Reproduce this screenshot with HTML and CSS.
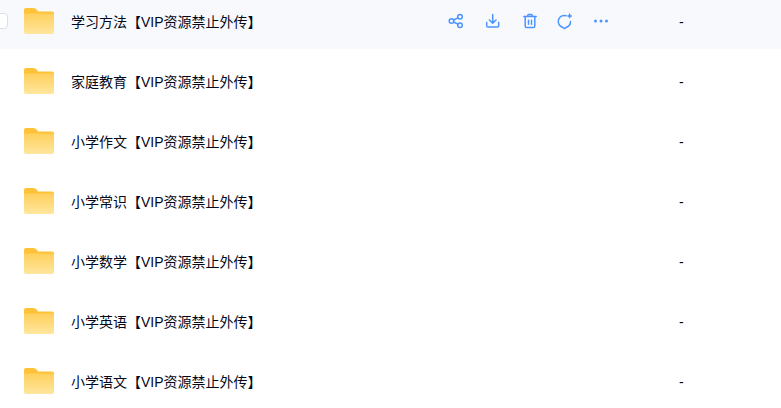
FILE: index.html
```html
<!DOCTYPE html>
<html lang="en">
<head>
    <meta charset="UTF-8">
    <title>文件列表</title>
    <link rel="stylesheet" href="styles.css">
</head>
<body>
    <svg class="icon-defs" width="0" height="0">
        <defs>
            <linearGradient id="folderBody" x1="0" y1="0" x2="0" y2="1">
                <stop offset="0" stop-color="#ffd05c"/>
                <stop offset="1" stop-color="#ffe69f"/>
            </linearGradient>
            <symbol id="folder" viewBox="0 0 30 26">
                <path d="M2 0h7.500c1.500 0 2.500.7 3.500 2l1 1.500H28a2 2 0 0 1 2 2V8H0V2a2 2 0 0 1 2-2z" fill="#ffc238"/>
                <path d="M0 5.500h28a2 2 0 0 1 2 2V24a2 2 0 0 1-2 2H2a2 2 0 0 1-2-2z" fill="url(#folderBody)"/>
            </symbol>
        </defs>
    </svg>

    <div class="file-list">
        <!-- first row is the hovered one -->
        <div class="file-row hovered">
            <span class="checkbox"></span>
            <svg class="folder-icon"><use href="#folder"/></svg>
            <div class="file-name">学习方法【VIP资源禁止外传】</div>
            <div class="row-actions">
                <svg class="action-icon" viewBox="0 0 16 16">
                    <circle cx="3.500" cy="8" r="2.300"/>
                    <circle cx="12" cy="3.800" r="2.300"/>
                    <circle cx="12" cy="12.200" r="2.300"/>
                    <path d="M5.600 7 9.900 4.800M5.600 9l4.300 2.200"/>
                </svg>
                <svg class="action-icon" viewBox="-0.700 0 16 16">
                    <path d="M8 1.500v8.500M4.700 7 8 10.200 11.300 7"/>
                    <path d="M2 9.500v3.300c0 .8.500 1.300 1.300 1.300h9.400c.8 0 1.300-.5 1.300-1.300V9.500"/>
                </svg>
                <svg class="action-icon" viewBox="-1 0 16 16">
                    <path d="M1.800 3.500h12.400M5.800 3.300V2.200c0-.5.300-.8.800-.8h2.800c.5 0 .8.300.8.800v1.100"/>
                    <path d="M3.200 3.500v9.700c0 .9.600 1.400 1.400 1.400h6.800c.8 0 1.400-.5 1.400-1.400V3.500"/>
                    <path d="M6.500 7.300v4M9.500 7.300v4"/>
                </svg>
                <svg class="action-icon" viewBox="0 0 16 16">
                    <path d="M9 2.700A6 6 0 1 0 5.500 14.200L7.500 15.600 9.500 14.200A6 6 0 0 0 13.500 8.500"/>
                    <path class="star" d="M12.600.8l.7 1.500 1.500.7-1.500.7-.7 1.500-.7-1.500-1.500-.7 1.500-.7z"/>
                </svg>
                <svg class="action-icon" viewBox="0 0 16 16">
                    <circle class="solid" cx="2.500" cy="8" r="1.500"/>
                    <circle class="solid" cx="8" cy="8" r="1.500"/>
                    <circle class="solid" cx="13.500" cy="8" r="1.500"/>
                </svg>
            </div>
            <div class="file-size">-</div>
        </div>
        <div class="file-row">
            <svg class="folder-icon"><use href="#folder"/></svg>
            <div class="file-name">家庭教育【VIP资源禁止外传】</div>
            <div class="file-size">-</div>
        </div>
        <div class="file-row">
            <svg class="folder-icon"><use href="#folder"/></svg>
            <div class="file-name">小学作文【VIP资源禁止外传】</div>
            <div class="file-size">-</div>
        </div>
        <div class="file-row">
            <svg class="folder-icon"><use href="#folder"/></svg>
            <div class="file-name">小学常识【VIP资源禁止外传】</div>
            <div class="file-size">-</div>
        </div>
        <div class="file-row">
            <svg class="folder-icon"><use href="#folder"/></svg>
            <div class="file-name">小学数学【VIP资源禁止外传】</div>
            <div class="file-size">-</div>
        </div>
        <div class="file-row">
            <svg class="folder-icon"><use href="#folder"/></svg>
            <div class="file-name">小学英语【VIP资源禁止外传】</div>
            <div class="file-size">-</div>
        </div>
        <div class="file-row">
            <svg class="folder-icon"><use href="#folder"/></svg>
            <div class="file-name">小学语文【VIP资源禁止外传】</div>
            <div class="file-size">-</div>
        </div>
    </div>
</body>
</html>
```

FILE: styles.css
```css
* {
    margin: 0;
    padding: 0;
    box-sizing: border-box;
}

html, body {
    height: 100%;
    overflow: hidden;
}

body {
    background: #fff;
    color: #03081a;
    font-family: "Liberation Sans", "Noto Sans CJK SC", sans-serif;
    font-size: 14px;
}

.icon-defs {
    position: absolute;
}

.file-list {
    margin-top: -11px;
}

.file-row {
    position: relative;
    display: flex;
    align-items: center;
    height: 60px;
    padding: 4px 0 0 24px;
}

.file-row.hovered {
    background: #f7f9fd;
}

.checkbox {
    position: absolute;
    left: -8px;
    top: 24px;
    width: 16px;
    height: 16px;
    background: #fff;
    border: 1px solid #dcdfe6;
    border-radius: 4px;
}

.folder-icon {
    flex: none;
    width: 30px;
    height: 26px;
}

.file-name {
    margin-left: 17px;
    white-space: nowrap;
}

.row-actions {
    position: absolute;
    left: 448px;
    top: 4px;
    bottom: 0;
    display: flex;
    align-items: center;
    gap: 20.250px;
}

.action-icon {
    width: 16px;
    height: 16px;
    overflow: visible;
    fill: none;
    stroke: #4d94ff;
    stroke-width: 1.500;
    stroke-linecap: round;
    stroke-linejoin: round;
}

.action-icon .solid {
    fill: #4d94ff;
    stroke: none;
}

.action-icon .star {
    fill: #4d94ff;
    stroke-width: 0.800;
}

.file-size {
    position: absolute;
    left: 679px;
    top: 4px;
    line-height: 58px;
}
```
